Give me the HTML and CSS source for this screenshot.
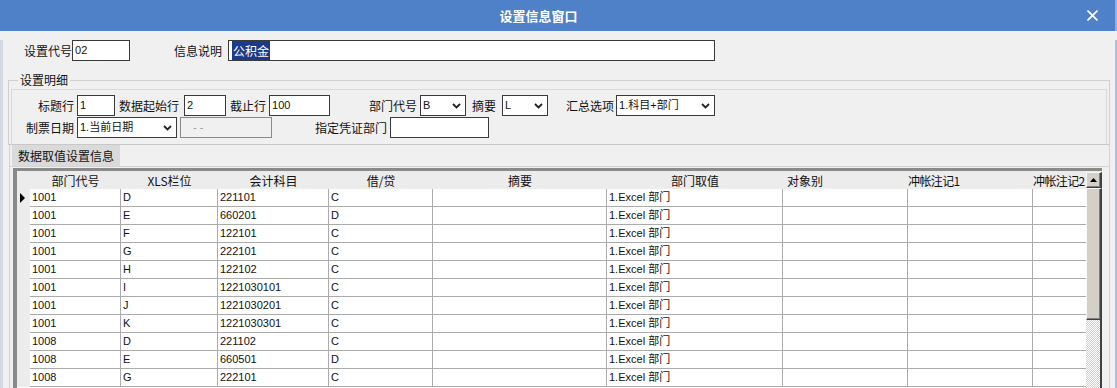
FILE: index.html
```html
<!DOCTYPE html>
<html lang="zh-CN">
<head>
    <meta charset="UTF-8">
    <title>设置信息窗口</title>
    <link rel="stylesheet" href="styles.css">
</head>
<body>
<div class="window">
    <div class="titlebar">
        <span class="title">设置信息窗口</span>
        <svg class="close" width="11" height="11" viewBox="0 0 11 11">
            <path d="M0.5 0.5 L10.5 10.5 M10.5 0.5 L0.5 10.5" stroke="#fff" stroke-width="1.6" fill="none"/>
        </svg>
    </div>

    <div class="main">
        <div class="row top-row">
            <span class="label">设置代号</span>
            <div class="field w-code">02</div>
            <span class="label ml-44">信息说明</span>
            <div class="field w-info ml-6"><span class="selected">公积金</span></div>
        </div>

        <fieldset class="group">
            <legend>设置明细</legend>
            <div class="panel">
                <div class="row">
                    <span class="label lead">标题行</span>
                    <div class="field w-38 ml-3">1</div>
                    <span class="label ml-4">数据起始行</span>
                    <div class="field w-42 ml-5">2</div>
                    <span class="label ml-4">截止行</span>
                    <div class="field w-61 ml-3">100</div>
                    <span class="label ml-39">部门代号</span>
                    <div class="combo w-46 ml-3"><span>B</span>
                        <svg class="chev" width="9" height="6" viewBox="0 0 9 6"><path d="M1 1 L4.5 4.5 L8 1" stroke="#222" stroke-width="1.8" fill="none"/></svg>
                    </div>
                    <span class="label ml-6">摘要</span>
                    <div class="combo w-46 ml-6"><span>L</span>
                        <svg class="chev" width="9" height="6" viewBox="0 0 9 6"><path d="M1 1 L4.5 4.5 L8 1" stroke="#222" stroke-width="1.8" fill="none"/></svg>
                    </div>
                    <span class="label ml-18">汇总选项</span>
                    <div class="combo w-99 ml-2"><span>1.科目+部门</span>
                        <svg class="chev" width="9" height="6" viewBox="0 0 9 6"><path d="M1 1 L4.5 4.5 L8 1" stroke="#222" stroke-width="1.8" fill="none"/></svg>
                    </div>
                </div>
                <div class="row">
                    <span class="label lead">制票日期</span>
                    <div class="combo w-100 ml-3"><span>1.当前日期</span>
                        <svg class="chev" width="9" height="6" viewBox="0 0 9 6"><path d="M1 1 L4.5 4.5 L8 1" stroke="#222" stroke-width="1.8" fill="none"/></svg>
                    </div>
                    <div class="field disabled w-92 ml-3">- -</div>
                    <span class="label ml-43">指定凭证部门</span>
                    <div class="field w-99 ml-3"></div>
                </div>
            </div>
        </fieldset>

        <div class="tabs">
            <div class="tab-strip">
                <div class="tab">数据取值设置信息</div>
            </div>

            <div class="grid">
                <div class="grid-body">
                    <table>
                        <colgroup>
                            <col style="width:13px"><col style="width:91px"><col style="width:97px">
                            <col style="width:111px"><col style="width:104px"><col style="width:174px">
                            <col style="width:176px"><col style="width:125px"><col style="width:125px">
                            <col style="width:125px">
                        </colgroup>
                        <thead>
                            <tr>
                                <th class="ind"></th>
                                <th>部门代号</th>
                                <th>XLS栏位</th>
                                <th>会计科目</th>
                                <th>借/贷</th>
                                <th>摘要</th>
                                <th>部门取值</th>
                                <th class="left">对象别</th>
                                <th class="clip">冲帐注记1</th>
                                <th class="clip">冲帐注记2</th>
                            </tr>
                        </thead>
                        <tbody id="rows"></tbody>
                    </table>
                </div>
                <div class="vscroll">
                    <div class="sb-btn">
                        <svg width="7" height="4" viewBox="0 0 7 4"><path d="M0 4 L3.5 0 L7 4 Z" fill="#000"/></svg>
                    </div>
                    <div class="sb-thumb"></div>
                    <div class="sb-track"></div>
                </div>
            </div>
        </div>
    </div>
</div>

<script>
    const data = [
        ['1001', 'D', '221101', 'C'],
        ['1001', 'E', '660201', 'D'],
        ['1001', 'F', '122101', 'C'],
        ['1001', 'G', '222101', 'C'],
        ['1001', 'H', '122102', 'C'],
        ['1001', 'I', '1221030101', 'C'],
        ['1001', 'J', '1221030201', 'C'],
        ['1001', 'K', '1221030301', 'C'],
        ['1008', 'D', '221102', 'C'],
        ['1008', 'E', '660501', 'D'],
        ['1008', 'G', '222101', 'C']
    ];

    const body = document.getElementById('rows');
    data.forEach(function (r, i) {
        const tr = document.createElement('tr');
        const mark = i === 0 ? '<span class="pointer"></span>' : '';
        tr.innerHTML = `<td class="ind">${mark}</td><td>${r[0]}</td><td>${r[1]}</td><td>${r[2]}</td><td>${r[3]}</td>` +
            `<td></td><td>1.Excel 部门</td><td></td><td></td><td></td>`;
        body.appendChild(tr);
    });
</script>
</body>
</html>
```

FILE: styles.css
```css
body {
    margin: 0;
    background: #f0f0f0;
    font-family: "Noto Sans CJK SC", "Liberation Sans", sans-serif;
    font-size: 12px;
    color: #111;
    overflow: hidden;
}
.window {
    width: 1117px;
    height: 388px;
    overflow: hidden;
    background: #f0f0f0;
}
.titlebar {
    height: 31px;
    background: #4f81c8;
    display: flex;
    align-items: center;
    border-right: 2px solid #8fb0e0;
}
.title {
    flex: 1;
    text-align: center;
    color: #fff;
    font-weight: bold;
    font-size: 13px;
}
.close {
    margin-left: 10px;
    margin-right: 17px;
}
.main {
    height: 357px;
    border-left: 3px solid #d3d9e2;
    border-right: 2px solid #a9c1e6;
}

/* form rows */
.row {
    display: flex;
    align-items: center;
    height: 21px;
}
.top-row {
    margin-top: 9px;
    padding-left: 21px;
}
.label {
    line-height: 21px;
    white-space: nowrap;
}
.lead {
    width: 62px;
    text-align: right;
}
.field, .combo {
    height: 21px;
    box-sizing: border-box;
    border: 1px solid #3a3a3a;
    background: #fff;
    font-family: "Liberation Sans", "Noto Sans CJK SC", sans-serif;
    font-size: 11px;
    line-height: 19px;
    padding-left: 2px;
    white-space: nowrap;
    overflow: hidden;
}
.combo {
    display: flex;
    align-items: center;
    justify-content: space-between;
    padding-right: 4px;
}
.combo span {
    font-family: "Liberation Sans", "Noto Sans CJK SC", sans-serif;
}
.chev {
    flex: none;
}
.field.disabled {
    background: #f0f0f0;
    border-color: #8a8a8a;
    color: #999;
    padding-left: 12px;
}
.selected {
    background: #1b3a8a;
    color: #fff;
    font-family: "Noto Sans CJK SC", sans-serif;
    font-size: 12px;
    padding: 1px 1px;
}

.w-code { width: 58px; }
.w-info { width: 487px; padding-left: 3px; }
.w-38 { width: 38px; }
.w-42 { width: 42px; }
.w-46 { width: 46px; }
.w-61 { width: 61px; }
.w-92 { width: 92px; }
.w-99 { width: 99px; }
.w-100 { width: 100px; }
.ml-2 { margin-left: 2px; }
.ml-3 { margin-left: 3px; }
.ml-4 { margin-left: 4px; }
.ml-5 { margin-left: 5px; }
.ml-6 { margin-left: 6px; }
.ml-18 { margin-left: 18px; }
.ml-39 { margin-left: 39px; }
.ml-43 { margin-left: 43px; }
.ml-44 { margin-left: 44px; }

/* group box */
.group {
    margin: 11px 5px 0 5px;
    padding: 0 2px;
    border: 1px solid #d0d0d0;
    border-bottom-color: #c8c8c8;
}
.group legend {
    margin-left: 7px;
    padding: 0 2px;
    line-height: 16px;
}
.panel {
    margin-top: 1px;
    border: 1px solid #d9d9d9;
    border-bottom: none;
    padding: 5px 0 6px 0;
    display: flex;
    flex-direction: column;
    gap: 1px;
}

/* tab page */
.tabs {
    margin: 0 5px 0 6px;
    border-left: 1px solid #d4d4d4;
    border-right: 1px solid #d4d4d4;
}
.tab-strip {
    height: 21px;
    border-bottom: 1px solid #d4d4d4;
    padding-left: 2px;
}
.tab {
    display: inline-block;
    height: 21px;
    line-height: 21px;
    padding: 0 6px;
    background: #dadada;
}

/* data grid */
.grid {
    margin: 1px 0 0 3px;
    width: 1089px;
    height: 230px;
    box-sizing: border-box;
    border-top: 3px solid #8a8a8a;
    border-left: 4px solid #8a8a8a;
    display: flex;
    background: #fff;
}
.grid-body {
    flex: 1;
    overflow: hidden;
}
table {
    width: 1141px;
    table-layout: fixed;
    border-collapse: separate;
    border-spacing: 0;
}
th {
    height: 18px;
    padding: 0;
    background: #ececec;
    font-weight: normal;
    font-size: 12px;
    text-align: center;
    white-space: nowrap;
    overflow: hidden;
}
th.left {
    text-align: left;
    padding-left: 4px;
}
th.clip {
    text-align: left;
    letter-spacing: -0.6px;
}
td {
    padding: 0 0 0 2px;
    line-height: 17px;
    border-right: 1px solid #ababab;
    border-bottom: 1px solid #ababab;
    font-family: "Liberation Sans", "Noto Sans CJK SC", sans-serif;
    font-size: 11px;
    white-space: nowrap;
    overflow: hidden;
}
td.ind, th.ind {
    background: #ececec;
    border: none;
    padding: 0;
    position: relative;
}
.pointer {
    position: absolute;
    left: 3px;
    top: 4px;
    border-left: 5px solid #000;
    border-top: 5px solid transparent;
    border-bottom: 5px solid transparent;
}

/* scrollbar */
.vscroll {
    width: 16px;
    display: flex;
    flex-direction: column;
    background: #ececec;
}
.sb-btn, .sb-thumb {
    box-sizing: border-box;
    background: #d4d0c8;
    border-top: 1px solid #f8f8f8;
    border-left: 1px solid #f8f8f8;
    border-right: 2px solid #404040;
    border-bottom: 1px solid #404040;
    box-shadow: inset -1px -1px #808080;
}
.sb-btn {
    margin-top: 1px;
    height: 16px;
    display: flex;
    align-items: center;
    justify-content: center;
}
.sb-thumb {
    height: 132px;
}
.sb-track {
    flex: 1;
    background: repeating-conic-gradient(#d4d0c8 0 25%, #ffffff 0 50%) 0 0 / 2px 2px;
    border-right: 2px solid #404040;
}
```
